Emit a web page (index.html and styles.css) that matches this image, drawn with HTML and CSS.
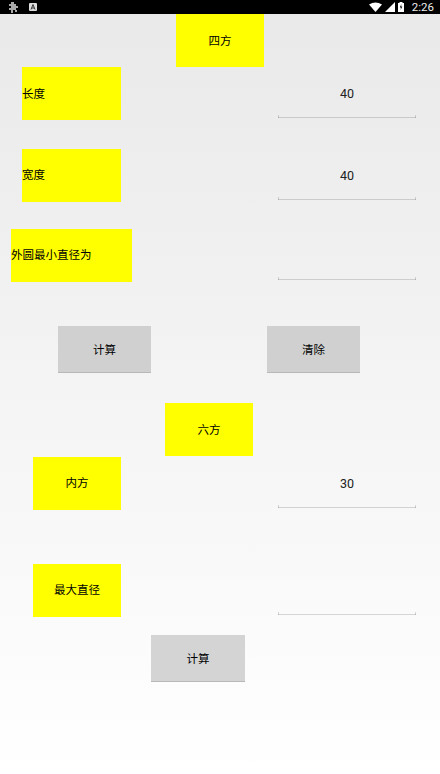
FILE: index.html
```html
<!DOCTYPE html>
<html lang="zh">
<head>
	<meta charset="UTF-8">
	<title>四方 六方</title>
	<link rel="stylesheet" href="styles.css">
</head>
<body>
<div class="status-bar">
	<div class="status-left">
		<svg class="icon-app" width="11" height="11" viewBox="0 0 11 11"><path d="M3 0h3v2h2v2h2v2H8v2h1v2H7V8H5v3H3V8H1V6h2V4H1V2h2z" fill="#aaa"/></svg>
		<svg class="icon-a" width="8" height="8" viewBox="0 0 8 8"><rect width="8" height="8" rx="1" fill="#ddd"/><path d="M2 6.500 4 1.500 6 6.500M3 5h2" fill="none" stroke="#333" stroke-width="1"/></svg>
	</div>
	<div class="status-right">
		<svg width="13" height="10" viewBox="0 0 13 10"><path d="M0 2.500Q6.500-1.500 13 2.500L6.500 10z" fill="#fff"/></svg>
		<svg width="10" height="10" viewBox="0 0 10 10"><path d="M10 0V10H0z" fill="#fff"/></svg>
		<svg width="6" height="10" viewBox="0 0 6 10"><path d="M1.500 0h3v1H6v9H0V1h1.500z" fill="#fff"/><path d="M3.400 2 1.800 5.500h1.200L2.600 8 4.300 4.500H3.100z" fill="#000"/></svg>
		<span class="time">2:26</span>
	</div>
</div>

<div class="title title-square">四方</div>
<div class="row">
	<div class="label label-long">长度</div>
	<input class="field" type="text" value="40">
</div>
<div class="row row-width">
	<div class="label label-long">宽度</div>
	<input class="field" type="text" value="40">
</div>
<div class="row row-circle">
	<div class="label label-wide">外圆最小直径为</div>
	<input class="field" type="text" value="">
</div>
<div class="buttons">
	<button class="btn btn-calc">计算</button>
	<button class="btn btn-clear">清除</button>
</div>

<div class="title title-hex">六方</div>
<div class="row row-inner">
	<div class="label label-short">内方</div>
	<input class="field" type="text" value="30">
</div>
<div class="row row-max">
	<div class="label label-short">最大直径</div>
	<input class="field" type="text" value="">
</div>
<button class="btn btn-calc2">计算</button>
</body>
</html>
```

FILE: styles.css
```css
*{margin: 0; padding: 0; box-sizing: border-box}
html,body{height: 100%}
body{
	width: 440px;
	height: 774px;
	overflow: hidden;
	font-family: "Noto Sans CJK SC", "Liberation Sans", sans-serif;
	font-size: 11.5px;
	color: #000;
	background: linear-gradient(#e9e9e9, #ffffff);
}
.status-bar{
	height: 14px;
	background-color: #000;
	display: flex;
	justify-content: space-between;
	align-items: center;
}
.status-left{
	display: flex;
	align-items: center;
	gap: 10px;
	padding-left: 8px;
}
.status-right{
	display: flex;
	align-items: center;
	gap: 3px;
	padding-right: 6px;
}
.time{
	font-family: Roboto, sans-serif;
	font-size: 11.5px;
	color: #eee;
	margin-left: 5px;
}
.title,.label{
	display: flex;
	align-items: center;
	height: 53px;
	padding-bottom: 2px;
	background-color: #ffff00;
}
.title{
	width: 88px;
	justify-content: center;
}
.title-square{margin-left: 176px}
.title-hex{margin: 30px 0 0 165px}
.row{
	display: flex;
	justify-content: space-between;
	height: 53px;
	padding-right: 24px;
}
.row-width{margin-top: 28.5px}
.row-circle{margin-top: 27px}
.row-inner{margin-top: 0.5px}
.row-max{margin-top: 54px}
.label{flex: none}
.label-long{width: 99px; margin-left: 22px}
.label-wide{width: 121px; margin-left: 11px}
.label-short{width: 88px; margin-left: 33px; justify-content: center}
.field{
	width: 138px;
	height: 51px;
	padding-top: 2px;
	border: 0;
	outline: 0;
	background:
		linear-gradient(rgba(0,0,0,.15), rgba(0,0,0,.15)) left bottom / 100% 1px no-repeat,
		linear-gradient(rgba(0,0,0,.15), rgba(0,0,0,.15)) left bottom / 1px 3px no-repeat,
		linear-gradient(rgba(0,0,0,.15), rgba(0,0,0,.15)) right bottom / 1px 3px no-repeat;
	text-align: center;
	font-family: Roboto, sans-serif;
	font-size: 12.5px;
	color: #222;
}
.buttons{
	display: flex;
	margin-top: 44.5px;
	padding-left: 58px;
	gap: 116px;
}
.btn{
	display: flex;
	align-items: center;
	justify-content: center;
	width: 93px;
	height: 47px;
	border: 0;
	border-bottom: 1px solid #b8b8b8;
	background-color: #d0d0d0;
	font-family: inherit;
	font-size: 11.5px;
	color: #000;
}
.btn-calc2{
	width: 94px;
	margin: 18px 0 0 151px;
	background-color: #d4d4d4;
}
```
